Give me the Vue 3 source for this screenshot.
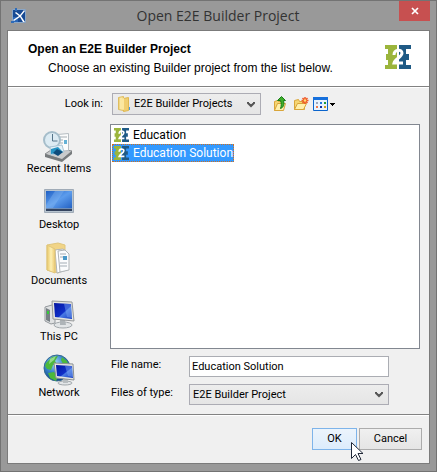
<script setup>
import { ref } from "vue";

const places = ["Recent Items", "Desktop", "Documents", "This PC", "Network"];
const projects = ["Education", "Education Solution"];

const selected = ref("Education Solution");
const fileName = ref("Education Solution");

function choose(name) {
  selected.value = name;
  fileName.value = name;
}
</script>

<template>
  <div class="window">
    <svg width="0" height="0" class="defs" aria-hidden="true">
      <defs>
        <linearGradient id="screen" x1="0" y1="0" x2="1" y2="1">
          <stop offset="0" stop-color="#1f5fc4" />
          <stop offset="0.5" stop-color="#5c9cec" />
          <stop offset="1" stop-color="#2462c4" />
        </linearGradient>
        <linearGradient id="monitor" x1="0" y1="0" x2="1" y2="1">
          <stop offset="0" stop-color="#0414a0" />
          <stop offset="0.55" stop-color="#1030c8" />
          <stop offset="0.6" stop-color="#4a7be4" />
          <stop offset="1" stop-color="#1238c0" />
        </linearGradient>
        <linearGradient id="folder" x1="0" y1="0" x2="1" y2="0">
          <stop offset="0" stop-color="#e9c766" />
          <stop offset="0.5" stop-color="#fdf0b4" />
          <stop offset="1" stop-color="#ecc970" />
        </linearGradient>
        <radialGradient id="globe" cx="0.4" cy="0.3" r="0.7">
          <stop offset="0" stop-color="#a8dcf8" />
          <stop offset="0.5" stop-color="#3a86d0" />
          <stop offset="1" stop-color="#124688" />
        </radialGradient>
        <symbol id="logo" viewBox="0 0 26 24">
          <path fill="#9bb53c" d="M0 0h12v24H0v-4h3v-5H1V9h2V4H0z" />
          <path fill="#1f5a85" d="M14 0h12v4h-5v5h3v6h-3v5h5v4H14z" />
          <path
            fill="none"
            stroke="#fff"
            stroke-width="3"
            d="M9 10c0-6 8-6 8-2 0 4-7 6-8 10h9"
          />
        </symbol>
      </defs>
    </svg>

    <header class="titlebar">
      <svg class="app-icon" width="16" height="16" viewBox="0 0 16 16">
        <path fill="#174a94" stroke="#8aa6c6" d="M1.500 1.500h13v13h-13z" />
        <path fill="#2f6cb8" d="M4 0h2v3H4zM0 13h3v2H0z" />
        <path fill="#2a67b8" d="M2 9h5v5H2z" />
        <path fill="#fff" d="M13 2l1 1-4 5 4 6h-2L9 9l-6 4-1-1 6-4-4-3 1-1 4 3z" />
      </svg>
      <span class="window-title">Open E2E Builder Project</span>
      <button class="close" aria-label="Close">
        <svg width="8" height="8" viewBox="0 0 8 8">
          <path stroke="#fff" stroke-width="1.700" d="M1 1l6 6M7 1L1 7" />
        </svg>
      </button>
    </header>

    <div class="content">
      <section class="banner">
        <div>
          <h1>Open an E2E Builder Project</h1>
          <p>Choose an existing Builder project from the list below.</p>
        </div>
        <svg width="26" height="24"><use href="#logo" /></svg>
      </section>

      <main class="chooser">
        <div class="look-row">
          <label for="look-in" class="look-label">Look in:</label>
          <div class="combo look-combo">
            <svg width="14" height="16" viewBox="0 0 14 16">
              <path fill="url(#folder)" stroke="#dfbd5e" d="M1.500 1.500l5-1v14l-5-1z" />
              <path fill="#f0ce70" stroke="#dfb850" d="M6.500 2.500l5-1v13l-5 1z" />
              <path fill="#fbe79f" d="M4 3l3-1v12l-3-1z" />
              <path fill="#4f9de0" d="M12 11h1v3h-1z" />
            </svg>
            <select id="look-in">
              <option>E2E Builder Projects</option>
            </select>
            <svg class="arrow" width="8" height="7" viewBox="0 0 8 7">
              <path fill="none" stroke="#555" stroke-width="2" d="M1 1v1l3 3 3-3V1" />
            </svg>
          </div>
          <div class="tools">
            <button aria-label="Up One Level">
              <svg width="16" height="16" viewBox="0 0 16 16">
                <path fill="#f6d674" stroke="#d9a53a" d="M1.500 14.500v-9l3-1 1 1h4v9z" />
                <path fill="#fff0ad" stroke="#d9a53a" d="M1.500 14.500l3-7h8l-2 7z" />
                <path
                  fill="#3fae2b"
                  stroke="#187c18"
                  d="M8.500.500l4 4h-2c1 4 0 7-3 8 1-3 1-5 0-8h-3z"
                />
              </svg>
            </button>
            <button aria-label="Create New Folder">
              <svg width="16" height="16" viewBox="0 0 16 16">
                <path fill="#f6d674" stroke="#d9a53a" d="M1.500 13.500v-9l4-1 1 2h5v8z" />
                <path fill="#fff0ad" stroke="#d9a53a" d="M1.500 13.500l3-6h9l-3 6z" />
                <path stroke="#f05a28" stroke-width="1.500" d="M12 1v7M8.500 4.500h7M9.500 2l5 5M14.500 2l-5 5" />
                <circle cx="12" cy="4.500" r="1.300" fill="#ffe070" />
              </svg>
            </button>
            <button aria-label="View Menu">
              <svg width="22" height="16" viewBox="0 0 22 16">
                <path fill="#e8f3fd" stroke="#0a64cc" d="M.5 1.500h14v13H.5z" />
                <path fill="#1670dc" d="M0 1h15v3H0z" />
                <path fill="#9ba5bd" d="M3 6h2v2H3z" />
                <path fill="#2078dc" d="M7 6h2v2H7z" />
                <path fill="#1c9c34" d="M11 6h2v2h-2z" />
                <path fill="#f07848" d="M3 10h2v2H3z" />
                <path fill="#1030a0" d="M7 10h2v2H7z" />
                <path fill="#d09a18" d="M11 10h2v2h-2z" />
                <path fill="#000" d="M17 7h5v1h-1v1h-1v1h-1V9h-1V8h-1z" />
              </svg>
            </button>
          </div>
        </div>

        <div class="browse">
          <nav class="places">
            <button v-for="place in places" :key="place" class="place">
              <svg width="32" height="32" viewBox="0 0 32 32">
                <g v-if="place === 'Recent Items'">
                  <path fill="#c9cbcc" stroke="#8c8f91" d="M2 24l9-6 18 3-10 9z" />
                  <path fill="#777b7d" d="M2 24l17 5 10-8v3l-10 8-17-5z" />
                  <path fill="#fbfcfc" stroke="#b6bdc2" d="M14.500 4.500l11-1v17l-11 1z" />
                  <path fill="#63b1d6" d="M21 10h3v4h-3z" />
                  <path stroke="#a6adb2" d="M16 7h8M16 10h4M16 13h4" />
                  <circle cx="9" cy="10" r="8" fill="#dcebf3" stroke="#a5bdca" stroke-width="2" />
                  <path fill="none" stroke="#55748a" d="M9.500 4v7h5" />
                  <path fill="#e5f3fa" stroke="#a9c4d4" d="M7 17l12-2 2 7-13 3z" />
                  <path fill="#2794c4" d="M8 19l7-2 5 5-12 2z" />
                  <path fill="#0d4c7c" d="M10 23l4-4 6 3-5 4z" />
                </g>
                <g v-else-if="place === 'Desktop'">
                  <path fill="#b7c4d0" stroke="#a0abb7" d="M1.500 3.500h29v23h-29z" />
                  <path fill="url(#screen)" d="M3 5h26v17H3z" />
                  <path fill="#8bbcf4" opacity="0.350" d="M12 5h9L10 22H3v-3z" />
                  <path fill="#34445f" d="M3 22h26v3H3z" />
                  <path fill="#6f8eb7" d="M3 22h26v1H3z" />
                </g>
                <g v-else-if="place === 'Documents'">
                  <path fill="#f1d486" stroke="#e0c67c" d="M4 3l11-2 7 2v24l-7 4L4 28z" />
                  <path fill="#fff" stroke="#b0b5b8" d="M12 8l8-1 4 3v18l-10 3z" />
                  <path fill="#fbfcfd" stroke="#b0b5b8" d="M15 9l7-1 4 4v16l-9 2z" />
                  <path stroke="#a4adb5" d="M17 12h6M17 15h3M17 21h7M17 24h7" />
                  <path fill="#4a98c8" d="M20 14h4v4h-4z" />
                  <path fill="url(#folder)" stroke="#e0c67c" d="M4 3l8 4v24l-8-3z" />
                </g>
                <g v-else-if="place === 'This PC'">
                  <path fill="#e0e2e3" stroke="#92979b" d="M2 9l7-2 3 1v17l-4 1-6-3z" />
                  <path fill="#777f84" d="M3 10l4 2v12l-4-2z" />
                  <path fill="#35cc38" d="M4 13h2v3H4z" />
                  <ellipse cx="20" cy="27" rx="9" ry="3" fill="#e2e5e7" stroke="#a1a7ab" />
                  <path fill="#aeb4b8" d="M17 22h5l1 5h-6z" />
                  <path fill="#e4e5e0" stroke="#96999b" d="M9 3l20 1 2 19-21-2z" />
                  <path fill="url(#monitor)" d="M11 5l17 1 1 15-17-2z" />
                  <path fill="#7faaf3" opacity="0.450" d="M21 6h7l1 14-5-1z" />
                </g>
                <g v-else>
                  <circle cx="14" cy="14" r="13" fill="url(#globe)" stroke="#336990" />
                  <path
                    fill="#4cb83c"
                    d="M3 9l6-6 6-1-3 5 2 3-4 1-2 5-4-1-2-3zM19 3l5 4 2 5-6-2-2-4zM5 19l6-1 4 5-2 4-6-3z"
                  />
                  <path fill="#c7efbf" opacity="0.600" d="M7 5l6-3-2 4-5 4z" />
                  <ellipse cx="22" cy="29" rx="7" ry="2" fill="#e2e5e7" stroke="#a1a7ab" />
                  <path fill="#b8bdc0" d="M20 25h5v4h-5z" />
                  <path fill="#e4e5e0" stroke="#8b9093" d="M11 9l19 1 1 16-18-2z" />
                  <path fill="url(#monitor)" d="M13 11l16 1 1 12-16-2z" />
                  <path fill="#7faaf3" opacity="0.450" d="M22 12h7l1 11-5-1z" />
                </g>
              </svg>
              <span>{{ place }}</span>
            </button>
          </nav>

          <div class="files">
            <ul class="file-list">
              <li v-for="name in projects" :key="name">
                <button class="file" :class="{ selected: name === selected }" @click="choose(name)">
                  <svg width="15" height="14"><use href="#logo" /></svg>
                  <span>{{ name }}</span>
                </button>
              </li>
            </ul>

            <div class="fields">
              <label for="file-name">File name:</label>
              <input id="file-name" v-model="fileName" type="text" />
              <label for="file-type">Files of type:</label>
              <div class="combo">
                <select id="file-type">
                  <option>E2E Builder Project</option>
                </select>
                <svg class="arrow" width="8" height="7" viewBox="0 0 8 7">
                  <path fill="none" stroke="#555" stroke-width="2" d="M1 1v1l3 3 3-3V1" />
                </svg>
              </div>
            </div>
          </div>
        </div>
      </main>

      <footer class="actions">
        <div class="ok-wrap">
          <button class="action ok">OK</button>
          <svg class="cursor" width="13" height="20" viewBox="0 0 13 20">
            <path fill="#fff" stroke="#202838" d="M.5.500v16l4-4 3 6 2.500-1-3-6h5z" />
          </svg>
        </div>
        <button class="action cancel">Cancel</button>
      </footer>
    </div>
  </div>
</template>

<style>
body {
  margin: 0;
}
</style>

<style scoped>
* {
  box-sizing: border-box;
}

.window {
  display: flex;
  flex-direction: column;
  min-height: 100vh;
  padding: 0 6px 7px;
  background: #999;
  border: 1px solid #737373;
  font-family: Roboto, sans-serif;
  font-size: 11px;
  line-height: 14px;
  color: #000;
}

.defs {
  position: absolute;
}

svg {
  display: block;
  flex-shrink: 0;
}

button,
input,
select {
  margin: 0;
  padding: 0;
  border: none;
  border-radius: 0;
  background: none;
  font: inherit;
  color: inherit;
}

.titlebar {
  display: flex;
  align-items: flex-start;
  height: 29px;
}

.app-icon {
  margin: 7px 0 0 4px;
}

.window-title {
  flex: 1;
  padding: 5px 0 0 10px;
  font-family: "Open Sans", sans-serif;
  font-size: 14px;
  line-height: 20px;
  text-align: center;
  color: #333;
}

.close {
  display: flex;
  align-items: center;
  justify-content: center;
  width: 31px;
  height: 20px;
  background: #c75050;
}

.content {
  display: flex;
  flex: 1;
  flex-direction: column;
  background: #f0f0f0;
  border: 1px solid #7b7b7b;
}

.banner {
  display: flex;
  justify-content: space-between;
  height: 56px;
  padding: 10px 18px 0 20px;
  background: #fff;
  border-bottom: 1px solid #828282;
  font-family: "Liberation Sans", Arial, sans-serif;
}

.banner svg {
  margin-top: 4px;
}

h1 {
  margin: 0;
  font-size: 12px;
  line-height: 16px;
}

p {
  margin: 2px 0 0 20px;
  font-size: 12px;
  line-height: 18px;
}

.chooser {
  display: flex;
  flex: 1;
  flex-direction: column;
  padding: 5px 9px 9px 0;
  border-top: 1px solid #fff;
}

.look-row {
  display: flex;
  align-items: center;
}

.look-label {
  width: 104px;
  padding-right: 9px;
  text-align: right;
}

.combo {
  position: relative;
  display: flex;
  align-items: center;
  height: 21px;
  background: linear-gradient(#ededed, #e5e5e5);
  border: 1px solid #acacb4;
}

.look-combo {
  width: 149px;
  height: 22px;
  padding-left: 4px;
}

.combo select {
  flex: 1;
  min-width: 0;
  height: 100%;
  padding: 0 20px 0 3px;
  appearance: none;
}

.arrow {
  position: absolute;
  right: 5px;
  pointer-events: none;
}

.tools {
  display: flex;
  gap: 4px;
  margin-left: 12px;
}

.browse {
  display: flex;
  flex: 1;
  margin-top: 9px;
}

.places {
  display: flex;
  flex-direction: column;
  gap: 10px;
  width: 102px;
  padding-top: 6px;
}

.place {
  display: flex;
  flex-direction: column;
  align-items: center;
}

.files {
  display: flex;
  flex: 1;
  flex-direction: column;
}

.file-list {
  flex: 1;
  margin: 0;
  padding: 1px;
  background: #fff;
  border: 1px solid #828790;
  list-style: none;
}

.file {
  display: flex;
  align-items: center;
  gap: 4px;
  height: 18px;
  padding-left: 1px;
  border: 1px solid transparent;
  font-size: 12px;
}

.selected {
  background: #39f;
  border: 1px dotted #d07020;
  color: #fff;
}

.fields {
  display: grid;
  grid-template-columns: 78px 1fr;
  row-gap: 7px;
  margin-top: 7px;
  padding: 0 31px 0 1px;
}

.fields input {
  width: 100%;
  height: 21px;
  padding: 0 2px;
  background: #fff;
  border: 1px solid #abadb3;
}

.fields label {
  padding-top: 2px;
}

.actions {
  display: flex;
  justify-content: flex-end;
  gap: 2px;
  height: 49px;
  padding: 13px 7px 0;
  border-top: 1px solid #828282;
  box-shadow: inset 0 1px #fff;
}

.ok-wrap {
  position: relative;
}

.action {
  height: 22px;
  background: linear-gradient(#f0f0f0, #e5e5e5);
  border: 1px solid #acacac;
}

.ok {
  width: 45px;
  background: linear-gradient(#ecf4fc, #dcecfc);
  border-color: #7eb4ea;
}

.cancel {
  width: 63px;
}

.cursor {
  position: absolute;
  left: 39px;
  top: 14px;
}
</style>
